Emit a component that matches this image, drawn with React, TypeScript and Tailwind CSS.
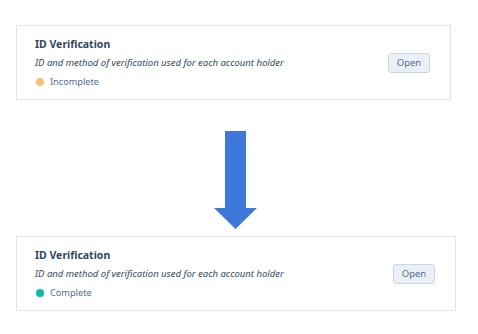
import React from "react";

function Card({ status, color, width }: { status: string; color: string; width: string }) {
  return (
    <div className={`${width} ml-[16px] border border-[#dfe3eb] bg-white flex items-center justify-between pl-[18px] pr-[20px] h-[75px]`}>
      <div className="flex flex-col">
        <div className="text-[10.5px] leading-[16px] font-bold text-[#33475b]">ID Verification</div>
        <div className="mt-[3px] text-[9.5px] leading-[16px] italic text-[#33475b]">
          ID and method of verification used for each account holder
        </div>
        <div className="mt-[3px] flex items-center text-[9.2px] leading-[16px] text-[#516f90]">
          <span className={`inline-block w-[8px] h-[8px] rounded-full ${color} ml-[1px] mr-[6px]`} />
          {status}
        </div>
      </div>
      <button className="h-[20px] w-[42px] rounded-[3px] border border-[#cbd6e2] bg-[#eaf0f6] text-[9.5px] text-[#506e91] leading-[18px]">
        Open
      </button>
    </div>
  );
}

export default function App() {
  return (
    <div
      className="w-[478px] h-[334px] bg-white pt-[25px]"
      style={{ fontFamily: '"Noto Sans", "Open Sans", sans-serif' }}
    >
      <Card status="Incomplete" color="bg-[#f5c26b]" width="w-[435px]" />
      <div className="h-[136px] flex items-start">
        <svg className="ml-[214px] mt-[31px]" width="43" height="98" viewBox="0 0 43 98">
          <path d="M11 0 H32 V77 H43 L21.5 98 L0 77 H11 Z" fill="#3e78db" />
        </svg>
      </div>
      <Card status="Complete" color="bg-[#00bda5]" width="w-[440px]" />
    </div>
  );
}
